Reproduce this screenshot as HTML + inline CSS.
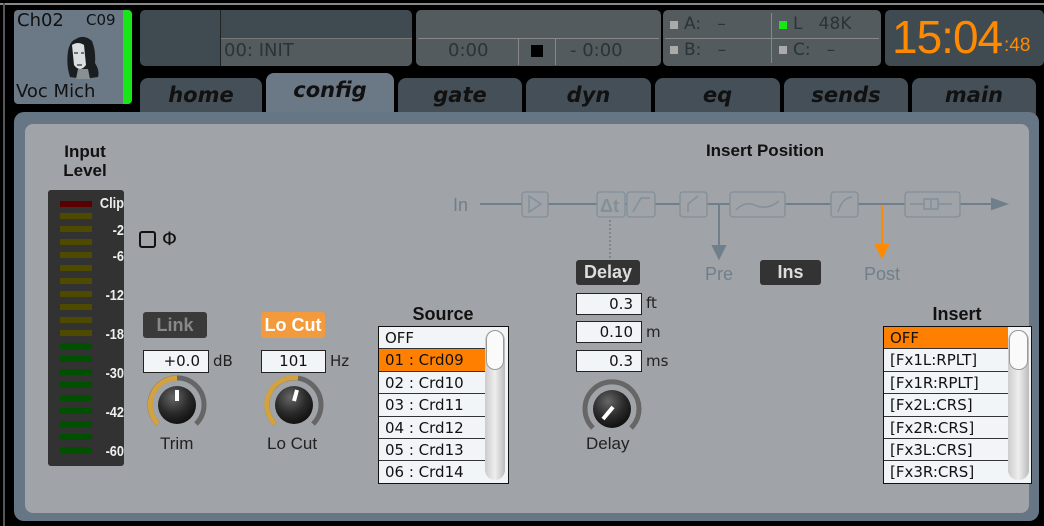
<!DOCTYPE html>
<html><head><meta charset="utf-8"><style>
*{margin:0;padding:0;box-sizing:border-box}
body{width:1044px;height:526px;background:#000;position:relative;overflow:hidden;font-family:"Liberation Sans","DejaVu Sans",sans-serif}
.a{position:absolute}
.dv{font-family:"DejaVu Sans","Liberation Sans",sans-serif}
.tab{position:absolute;top:78px;height:36px;background:#454f57;border-radius:8px 8px 0 0;color:#111;font:italic bold 21px "DejaVu Sans",sans-serif;text-align:center;line-height:34px}
.fld{position:absolute;background:#f2f5f7;border:1px solid #222;font:15px "DejaVu Sans",sans-serif;text-align:right;padding-right:8px;line-height:20px;color:#111}
.unit{position:absolute;font:15px "DejaVu Sans",sans-serif;color:#222}
.lbl{position:absolute;font:bold 17px "Liberation Sans",sans-serif;color:#111;text-align:center}
.list{position:absolute;background:#f2f5f7;border:1px solid #111}
.row{height:22.4px;border-bottom:1px solid #333;font:15px "DejaVu Sans",sans-serif;line-height:22px;padding-left:6px;color:#111;width:106px}
.seg{position:absolute;left:60px;width:32px;height:6px}
.ml{position:absolute;left:92px;width:32px;text-align:right;color:#eee;font:bold 15px "Liberation Sans",sans-serif;transform:scaleX(.85);transform-origin:right}
</style></head><body>
<div class="a" style="left:0;top:3px;width:1044px;height:2px;background:#888"></div>
<div class="a" style="left:3px;top:3px;width:2px;height:523px;background:#555"></div>
<!-- channel tile -->
<div class="a" style="left:14px;top:10px;width:112px;height:94px;background:#6b7886;border-radius:4px"></div>
<div class="a" style="left:123px;top:10px;width:9px;height:94px;background:#19e619;border-radius:0 4px 4px 0"></div>
<div class="a dv" style="left:17px;top:10px;font-size:18px;color:#111">Ch02</div>
<div class="a dv" style="left:86px;top:11px;font-size:15px;color:#111">C09</div>
<svg class="a" style="left:62px;top:35px" width="46" height="46" viewBox="0 0 46 46"><path d="M14 4 Q22 -1 30 6 Q34 16 33 28 Q38 36 36 42 L22 44 L8 42 Q4 30 6 16 Q8 6 14 4Z" fill="#1a1e20"/><path d="M10 10 Q16 6 22 10 L24 30 Q18 38 12 30 Z" fill="#d9dfe0"/><path d="M14 44 L16 34 L26 34 L28 44Z" fill="#8a9092"/><path d="M12 18 L16 18 M19 18 L22 18 M15 30 L20 30" stroke="#333" stroke-width="1.3"/></svg>
<div class="a dv" style="left:16px;top:81px;font-size:18px;color:#111">Voc Mich</div>
<!-- top boxes -->
<div class="a" style="left:140px;top:10px;width:272px;height:56px;background:#3f4a51;border-radius:5px"></div>
<div class="a" style="left:220px;top:10px;width:1px;height:56px;background:#222"></div>
<div class="a" style="left:221px;top:38px;width:191px;height:28px;background:#545b5e;border-top:1px solid #777;border-radius:0 0 5px 0"></div>
<div class="a dv" style="left:224px;top:40px;font-size:18px;color:#2b3336">00: INIT</div>
<div class="a" style="left:416px;top:10px;width:245px;height:56px;background:#545b5e;border-radius:5px"></div>
<div class="a" style="left:418px;top:38px;width:241px;height:1px;background:#888"></div>
<div class="a dv" style="left:448px;top:40px;font-size:18px;color:#2b3336">0:00</div>
<div class="a" style="left:518px;top:39px;width:1px;height:26px;background:#888"></div>
<div class="a" style="left:555px;top:39px;width:1px;height:26px;background:#888"></div>
<div class="a" style="left:531px;top:45px;width:12px;height:12px;background:#000"></div>
<div class="a dv" style="left:570px;top:40px;font-size:18px;color:#2b3336">- 0:00</div>
<div class="a" style="left:663px;top:10px;width:218px;height:56px;background:#545b5e;border-radius:5px"></div>
<div class="a" style="left:665px;top:38px;width:214px;height:1px;background:#888"></div>
<div class="a" style="left:771px;top:13px;width:1px;height:50px;background:#888"></div>
<div class="a" style="left:670px;top:21px;width:8px;height:8px;background:#aaa"></div>
<div class="a" style="left:670px;top:46px;width:8px;height:8px;background:#aaa"></div>
<div class="a" style="left:779px;top:21px;width:8px;height:8px;background:#19e619"></div>
<div class="a" style="left:779px;top:46px;width:8px;height:8px;background:#aaa"></div>
<div class="a dv" style="left:684px;top:14px;font-size:17px;color:#2b3336">A:&nbsp;&nbsp; –</div>
<div class="a dv" style="left:684px;top:40px;font-size:17px;color:#2b3336">B:&nbsp;&nbsp; –</div>
<div class="a dv" style="left:793px;top:14px;font-size:17px;color:#2b3336">L&nbsp;&nbsp; 48K</div>
<div class="a dv" style="left:793px;top:40px;font-size:17px;color:#2b3336">C:&nbsp;&nbsp; –</div>
<div class="a" style="left:885px;top:10px;width:159px;height:56px;background:#3f4a51;border-radius:5px"></div>
<div class="a" style="left:892px;top:10px;font-size:46px;color:#ff8a00;letter-spacing:-1px">15:04</div>
<div class="a" style="left:1004px;top:35px;font-size:19px;color:#ff8a00">:48</div>
<!-- tabs -->
<div class="tab" style="left:140px;width:122px">home</div>
<div class="tab" style="left:266px;top:73px;height:42px;width:128px;background:#6b7886;line-height:34px">config</div>
<div class="tab" style="left:398px;width:124px">gate</div>
<div class="tab" style="left:526px;width:125px">dyn</div>
<div class="tab" style="left:655px;width:125px">eq</div>
<div class="tab" style="left:784px;width:124px">sends</div>
<div class="tab" style="left:912px;width:124px">main</div>
<!-- panel -->
<div class="a" style="left:14px;top:112px;width:1025px;height:409px;background:#667684;border-radius:10px"></div>
<div class="a" style="left:25px;top:124px;width:1004px;height:389px;background:#a0a3a7;border-radius:8px"></div>
<div class="lbl" style="left:50px;top:142px;width:70px;line-height:19px">Input<br>Level</div>
<div class="a" style="left:48px;top:190px;width:76px;height:276px;background:#323232;border-radius:3px"></div>
<div class="seg" style="top:201px;background:#5a0000"></div>
<div class="seg" style="top:213px;background:#4e4b00"></div><div class="seg" style="top:226px;background:#4e4b00"></div><div class="seg" style="top:239px;background:#4e4b00"></div><div class="seg" style="top:252px;background:#4e4b00"></div><div class="seg" style="top:265px;background:#4e4b00"></div><div class="seg" style="top:278px;background:#4e4b00"></div><div class="seg" style="top:291px;background:#4e4b00"></div><div class="seg" style="top:304px;background:#4e4b00"></div><div class="seg" style="top:317px;background:#4e4b00"></div><div class="seg" style="top:330px;background:#4e4b00"></div>
<div class="seg" style="top:343px;background:#005000"></div><div class="seg" style="top:356px;background:#005000"></div><div class="seg" style="top:369px;background:#005000"></div><div class="seg" style="top:382px;background:#005000"></div><div class="seg" style="top:395px;background:#005000"></div><div class="seg" style="top:408px;background:#005000"></div><div class="seg" style="top:421px;background:#005000"></div><div class="seg" style="top:434px;background:#005000"></div><div class="seg" style="top:447px;background:#005000"></div>
<div class="ml" style="top:195px">Clip</div><div class="ml" style="top:222px">-2</div><div class="ml" style="top:248px">-6</div><div class="ml" style="top:287px">-12</div><div class="ml" style="top:326px">-18</div><div class="ml" style="top:365px">-30</div><div class="ml" style="top:404px">-42</div><div class="ml" style="top:443px">-60</div>
<div class="a" style="left:139px;top:231px;width:17px;height:17px;border:2px solid #111;border-radius:3px"></div>
<div class="a dv" style="left:162px;top:228px;font-size:19px;color:#111">Φ</div>
<!-- link / locut -->
<div class="a" style="left:143px;top:312px;width:64px;height:26px;background:#3a3a3a;border-radius:3px;color:#888;font:bold 18px 'Liberation Sans';text-align:center;line-height:26px">Link</div>
<div class="a" style="left:261px;top:312px;width:64px;height:26px;background:#f39a3c;border-radius:3px;color:#fff;font:bold 18px 'Liberation Sans';text-align:center;line-height:26px">Lo Cut</div>
<div class="fld" style="left:143px;top:350px;width:66px;height:23px">+0.0</div><div class="unit" style="left:213px;top:352px">dB</div>
<div class="fld" style="left:261px;top:350px;width:65px;height:23px;text-align:center;padding:0">101</div><div class="unit" style="left:330px;top:352px">Hz</div>
<svg class="a" style="left:140px;top:370px" width="360" height="100">
 <defs><radialGradient id="g" cx=".4" cy=".3" r=".7"><stop offset="0" stop-color="#666"/><stop offset=".6" stop-color="#2a2a2a"/><stop offset="1" stop-color="#111"/></radialGradient></defs>
 <g transform="translate(37,35)"><path d="M-19 19 A27 27 0 1 1 19 19" fill="none" stroke="#666" stroke-width="5"/><path d="M-19 19 A27 27 0 0 1 0 -27" fill="none" stroke="#d3a13e" stroke-width="5"/><circle r="19" fill="url(#g)"/><path d="M0 -15 L0 -4" stroke="#fff" stroke-width="4"/></g>
 <g transform="translate(154,35)"><path d="M-19 19 A27 27 0 1 1 19 19" fill="none" stroke="#666" stroke-width="5"/><path d="M-19 19 A27 27 0 0 1 4 -27" fill="none" stroke="#d3a13e" stroke-width="5"/><circle r="19" fill="url(#g)"/><path d="M3 -15 L0 -4" stroke="#fff" stroke-width="4"/></g>
</svg>
<div class="a" style="left:160px;top:434px;font-size:17px;color:#222">Trim</div>
<div class="a" style="left:267px;top:434px;font-size:17px;color:#222">Lo Cut</div>
<!-- source -->
<div class="lbl" style="left:378px;top:304px;width:130px;font-size:18px">Source</div>
<div class="list" style="left:378px;top:326px;width:131px;height:158px">
 <div class="row">OFF</div><div class="row" style="background:#ff8000">01 : Crd09</div><div class="row">02 : Crd10</div><div class="row">03 : Crd11</div><div class="row">04 : Crd12</div><div class="row">05 : Crd13</div><div class="row" style="border:none">06 : Crd14</div>
 <div class="a" style="left:106px;top:3px;width:20px;height:150px;background:linear-gradient(90deg,#ccc,#eee,#bbb);border-radius:10px"></div>
 <div class="a" style="left:107px;top:3px;width:18px;height:40px;background:#fafafa;border:1px solid #999;border-radius:9px"></div>
</div>
<!-- insert -->
<div class="lbl" style="left:883px;top:304px;width:148px;font-size:18px">Insert</div>
<div class="list" style="left:883px;top:326px;width:149px;height:158px">
 <div class="row" style="background:#ff8000;width:124px">OFF</div><div class="row" style="width:124px">[Fx1L:RPLT]</div><div class="row" style="width:124px">[Fx1R:RPLT]</div><div class="row" style="width:124px">[Fx2L:CRS]</div><div class="row" style="width:124px">[Fx2R:CRS]</div><div class="row" style="width:124px">[Fx3L:CRS]</div><div class="row" style="width:124px;border:none">[Fx3R:CRS]</div>
 <div class="a" style="left:124px;top:3px;width:21px;height:150px;background:linear-gradient(90deg,#ccc,#eee,#bbb);border-radius:10px"></div>
 <div class="a" style="left:125px;top:3px;width:19px;height:40px;background:#fafafa;border:1px solid #999;border-radius:9px"></div>
</div>
<!-- insert position -->
<div class="lbl" style="left:680px;top:141px;width:170px;font-size:17px">Insert Position</div>
<svg class="a" style="left:440px;top:180px" width="580" height="110" fill="none" stroke="#6f7f8c" stroke-width="2">
 <path d="M40 24 H560"/><path d="M552 19 L566 24 L552 29Z" fill="#6f7f8c"/>
 <g fill="#a0a3a7" stroke="#82909a" stroke-width="1.3">
 <rect x="82" y="12" width="26" height="25" rx="3"/><rect x="157" y="12" width="28" height="25" rx="3"/><rect x="187" y="12" width="28" height="25" rx="3"/><rect x="240" y="12" width="27" height="25" rx="3"/><rect x="290" y="12" width="55" height="25" rx="3"/><rect x="391" y="12" width="27" height="25" rx="3"/><rect x="465" y="12" width="55" height="25" rx="3"/></g>
 <g stroke="#82909a" stroke-width="1.5"><path d="M89 16 L101 24 L89 32Z"/><path d="M193 32 L201 18 H210"/><path d="M248 32 V24 L258 16"/><path d="M296 30 Q305 20 317 26 Q328 30 339 21"/><path d="M398 32 Q402 18 412 17"/><path d="M470 24 H484 M498 24 H512"/><rect x="484" y="19" width="14" height="10"/><path d="M491 19 V29"/></g>
 <text x="160" y="32" fill="#82909a" stroke="none" font-family="Liberation Sans" font-weight="bold" font-size="18">Δt</text>
 <path d="M170 40 V80" stroke-dasharray="2 2" stroke-width="1.5"/>
 <path d="M279 24 V70"/><path d="M273 66 L279 78 L285 66Z" fill="#6f7f8c"/>
 <path d="M442 26 V68" stroke="#ff8a00"/><path d="M436 65 L442 77 L448 65Z" fill="#ff8a00" stroke="#ff8a00"/>
 <text x="13" y="31" fill="#6f7f8c" stroke="none" font-family="Liberation Sans" font-size="18">In</text>
 <text x="265" y="100" fill="#6f7f8c" stroke="none" font-family="Liberation Sans" font-size="18">Pre</text>
 <text x="424" y="100" fill="#6f7f8c" stroke="none" font-family="Liberation Sans" font-size="18">Post</text>
</svg>
<div class="a" style="left:576px;top:260px;width:64px;height:25px;background:#333;border-radius:3px;color:#ddd;font:bold 18px 'Liberation Sans';text-align:center;line-height:25px">Delay</div>
<div class="a" style="left:760px;top:260px;width:61px;height:25px;background:#333;border-radius:3px;color:#ddd;font:bold 18px 'Liberation Sans';text-align:center;line-height:25px">Ins</div>
<div class="fld" style="left:576px;top:293px;width:66px;height:22px">0.3</div><div class="unit" style="left:646px;top:294px">ft</div>
<div class="fld" style="left:576px;top:321px;width:66px;height:22px">0.10</div><div class="unit" style="left:646px;top:323px">m</div>
<div class="fld" style="left:576px;top:350px;width:66px;height:22px">0.3</div><div class="unit" style="left:646px;top:352px">ms</div>
<svg class="a" style="left:578px;top:378px" width="70" height="60"><defs><radialGradient id="g2" cx=".4" cy=".3" r=".7"><stop offset="0" stop-color="#666"/><stop offset=".6" stop-color="#2a2a2a"/><stop offset="1" stop-color="#111"/></radialGradient></defs><g transform="translate(34,31)"><path d="M-19 19 A27 27 0 1 1 19 19" fill="none" stroke="#666" stroke-width="5"/><circle r="19" fill="url(#g2)"/><path d="M-9 10 L1 -2" stroke="#fff" stroke-width="4"/></g></svg>
<div class="a" style="left:586px;top:434px;font-size:17px;color:#222">Delay</div>
</body></html>
